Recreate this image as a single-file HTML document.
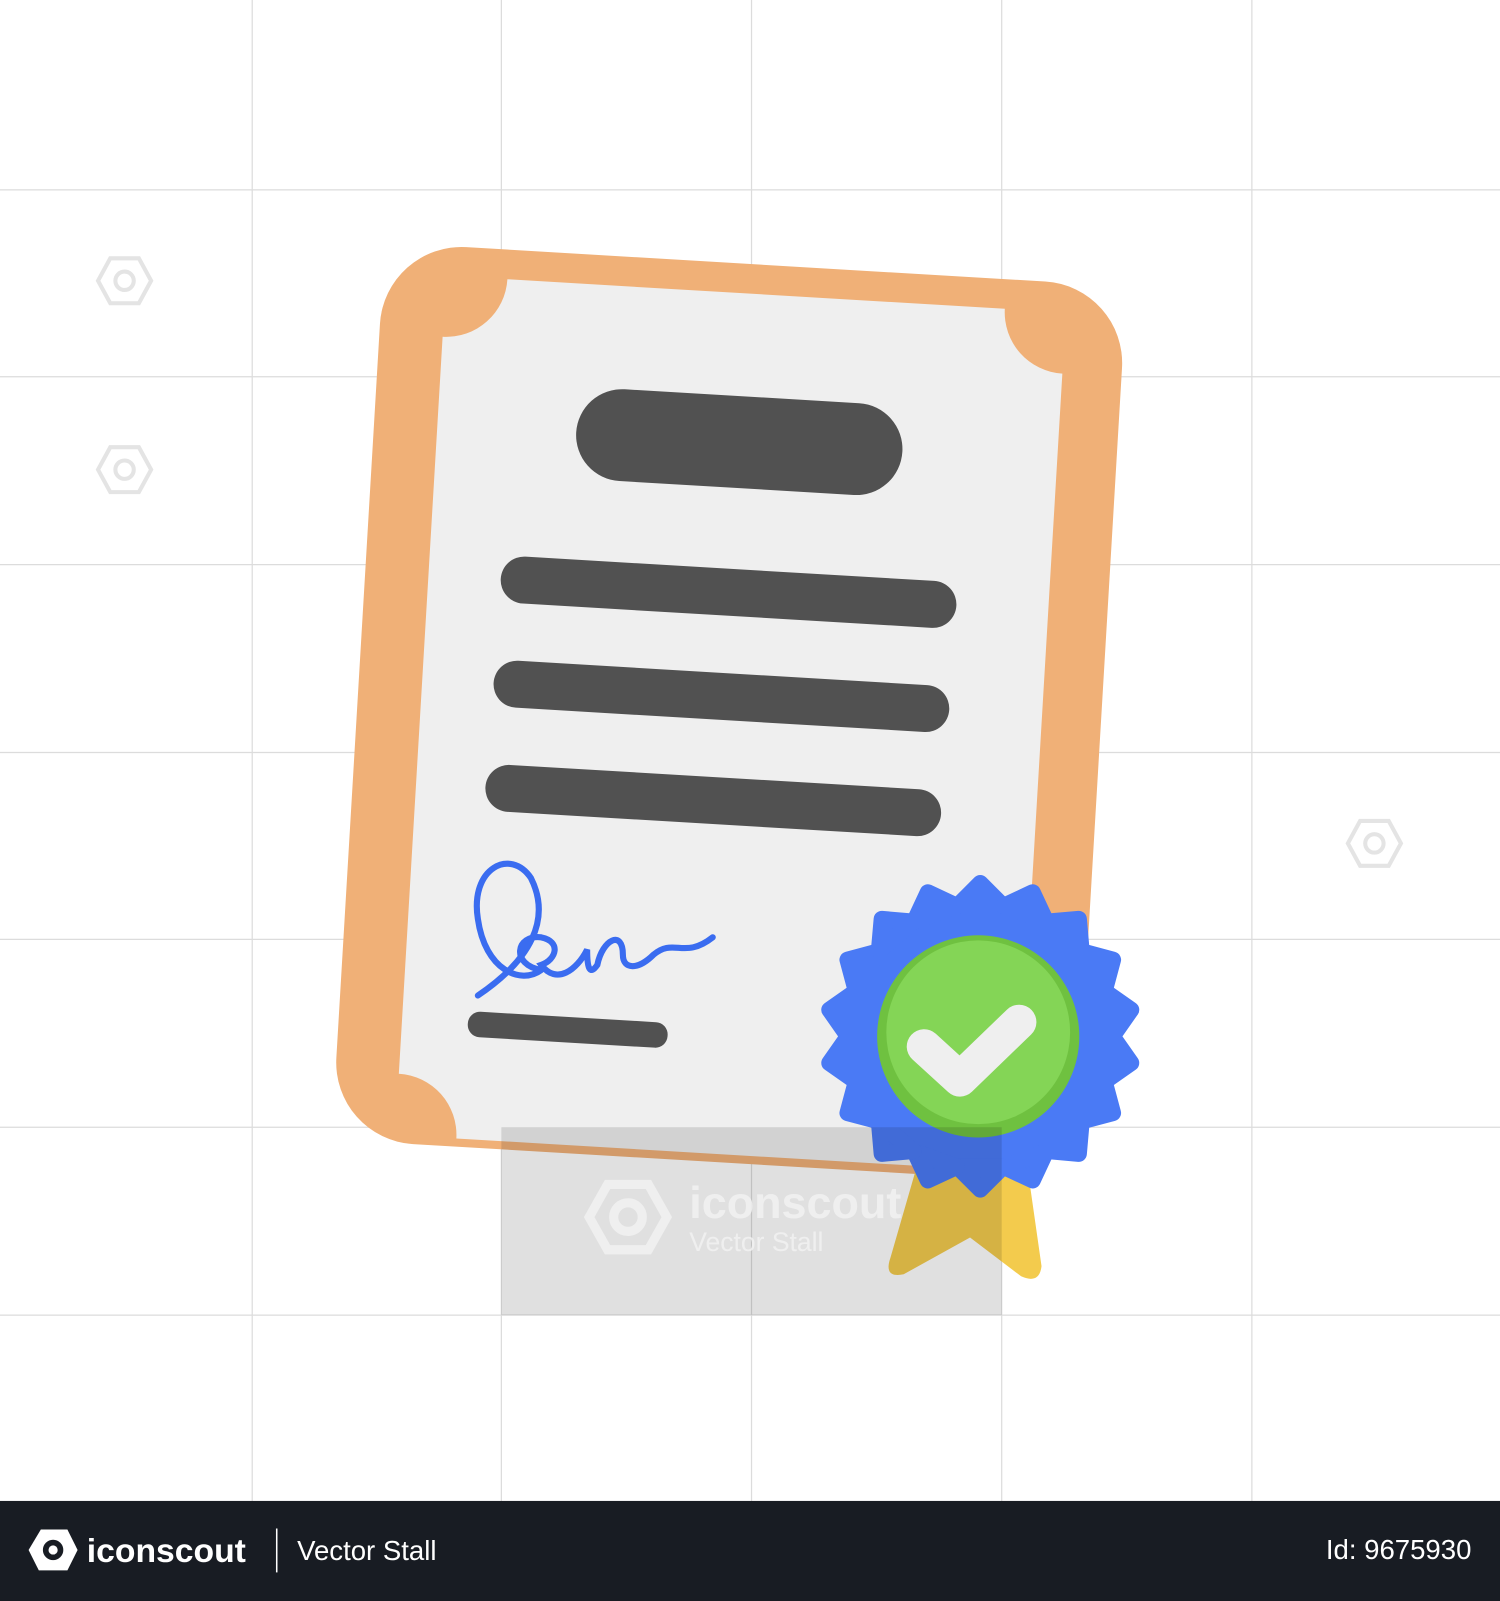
<!DOCTYPE html>
<html><head><meta charset="utf-8"><style>
html,body{margin:0;padding:0;background:#fff;}
svg{display:block;}
</style></head><body>
<svg width="1500" height="1601" viewBox="0 0 1469 1568" preserveAspectRatio="none" xmlns="http://www.w3.org/2000/svg">
<rect width="1469" height="1568" fill="#fff"/>
<g stroke="#dcdcdc" stroke-width="1.2">
<line x1="247" y1="0" x2="247" y2="1470"/><line x1="491" y1="0" x2="491" y2="1470"/><line x1="736" y1="0" x2="736" y2="1470"/><line x1="981" y1="0" x2="981" y2="1470"/><line x1="1226" y1="0" x2="1226" y2="1470"/>
<line x1="0" y1="186" x2="1469" y2="186"/><line x1="0" y1="369" x2="1469" y2="369"/><line x1="0" y1="553" x2="1469" y2="553"/><line x1="0" y1="737" x2="1469" y2="737"/><line x1="0" y1="920" x2="1469" y2="920"/><line x1="0" y1="1104" x2="1469" y2="1104"/><line x1="0" y1="1288" x2="1469" y2="1288"/>
</g>
<g fill="none" stroke="#e4e4e4" stroke-width="4">
<g transform="translate(122,275)"><path d="M-14,-22 L14,-22 L26,0 L14,22 L-14,22 L-26,0Z"/><circle r="9"/></g>
<g transform="translate(122,460)"><path d="M-14,-22 L14,-22 L26,0 L14,22 L-14,22 L-26,0Z"/><circle r="9"/></g>
<g transform="translate(612,642)"><path d="M-14,-22 L14,-22 L26,0 L14,22 L-14,22 L-26,0Z"/><circle r="9"/></g>
<g transform="translate(1346,826)"><path d="M-14,-22 L14,-22 L26,0 L14,22 L-14,22 L-26,0Z"/><circle r="9"/></g>
</g>
<!-- board -->
<g transform="rotate(3.4 712 700)">
<rect x="350" y="258" width="728" height="880" rx="80" fill="#f0b077"/>
<path d="M520,287 L960,287 A60,60 0 0 0 1020,347 L1020,1070 A60,60 0 0 0 960,1130 L472,1130 A60,60 0 0 0 412,1070 L412,347 A60,60 0 0 0 472,287 Z" fill="#efefef"/>
</g>
<g fill="#515151">
<rect x="564" y="388" width="320" height="90" rx="45" transform="rotate(3.4 724 433)"/>
<rect x="490" y="557" width="447" height="46" rx="23" transform="rotate(3.4 713 580)"/>
<rect x="483" y="659" width="447" height="46" rx="23" transform="rotate(3.4 706 682)"/>
<rect x="475" y="761" width="447" height="46" rx="23" transform="rotate(3.4 698 784)"/>
<rect x="458" y="996" width="196" height="25" rx="12" transform="rotate(3.4 556 1008)"/>
</g>
<path d="M468,975 C520,940 540,900 520,860 C500,830 460,850 468,900 C475,950 510,965 530,950 M530,950 C500,945 505,915 530,918 C550,922 545,940 530,945 C545,965 565,950 575,930 C575,950 578,955 585,945 C590,920 610,910 610,935 C610,950 625,950 640,935 C660,918 670,940 698,918" fill="none" stroke="#3a6cf0" stroke-width="6" stroke-linecap="round"/>
<!-- ribbon -->
<path d="M900,1135 L1005,1135 L1020,1240 Q1018,1258 1000,1250 L950,1212 L885,1248 Q865,1252 872,1232 Z" fill="#f3cb4d"/>
<!-- badge -->
<g transform="translate(960,1015)" fill="#4a7af5">
<circle r="138"/>
<defs><path id="sp" d="M-22,-128 L0,-150 L22,-128 Z" stroke="#4a7af5" stroke-width="16" stroke-linejoin="round"/></defs>
<use href="#sp"/><use href="#sp" transform="rotate(20)"/><use href="#sp" transform="rotate(40)"/><use href="#sp" transform="rotate(60)"/><use href="#sp" transform="rotate(80)"/><use href="#sp" transform="rotate(100)"/><use href="#sp" transform="rotate(120)"/><use href="#sp" transform="rotate(140)"/><use href="#sp" transform="rotate(160)"/><use href="#sp" transform="rotate(180)"/><use href="#sp" transform="rotate(200)"/><use href="#sp" transform="rotate(220)"/><use href="#sp" transform="rotate(240)"/><use href="#sp" transform="rotate(260)"/><use href="#sp" transform="rotate(280)"/><use href="#sp" transform="rotate(300)"/><use href="#sp" transform="rotate(320)"/><use href="#sp" transform="rotate(340)"/>
<circle cx="-2" cy="0" r="99" fill="#6fc140"/>
<circle cx="-2" cy="-4" r="90" fill="#84d556"/>
<path d="M-55,10 L-20,42 L38,-14" fill="none" stroke="#efefef" stroke-width="34" stroke-linecap="round" stroke-linejoin="round"/>
</g>
<rect x="491" y="1104" width="490" height="184" fill="#e0e0e0" style="mix-blend-mode:multiply"/>
<!-- watermark -->
<g opacity="0.85">
<g transform="translate(615,1192)" fill="none" stroke="#f2f2f2" stroke-width="9"><path d="M-20,-32 L20,-32 L38,0 L20,32 L-20,32 L-38,0Z"/><circle r="14"/></g>
<text x="675" y="1193" font-family="Liberation Sans, sans-serif" font-size="44" font-weight="bold" fill="#f2f2f2">iconscout</text>
<text x="675" y="1225" font-family="Liberation Sans, sans-serif" font-size="26" fill="#f2f2f2">Vector Stall</text>
</g>
<!-- footer -->
<rect x="0" y="1470" width="1469" height="98" fill="#181c23"/>
<g transform="translate(52,1518)"><path d="M-12,-20 L14,-20 L24,0 L14,20 L-14,20 L-24,0Z" fill="#fff"/><circle r="10" fill="#181c23"/><circle r="4.5" fill="#fff"/></g>
<text x="85" y="1530" font-family="Liberation Sans, sans-serif" font-size="33" font-weight="bold" fill="#fff">iconscout</text>
<line x1="271" y1="1497" x2="271" y2="1540" stroke="#fff" stroke-width="1.5"/>
<text x="291" y="1528" font-family="Liberation Sans, sans-serif" font-size="27" fill="#fff">Vector Stall</text>
<text x="1441" y="1527" text-anchor="end" font-family="Liberation Sans, sans-serif" font-size="27" fill="#fff">Id: 9675930</text>
</svg>
</body></html>
